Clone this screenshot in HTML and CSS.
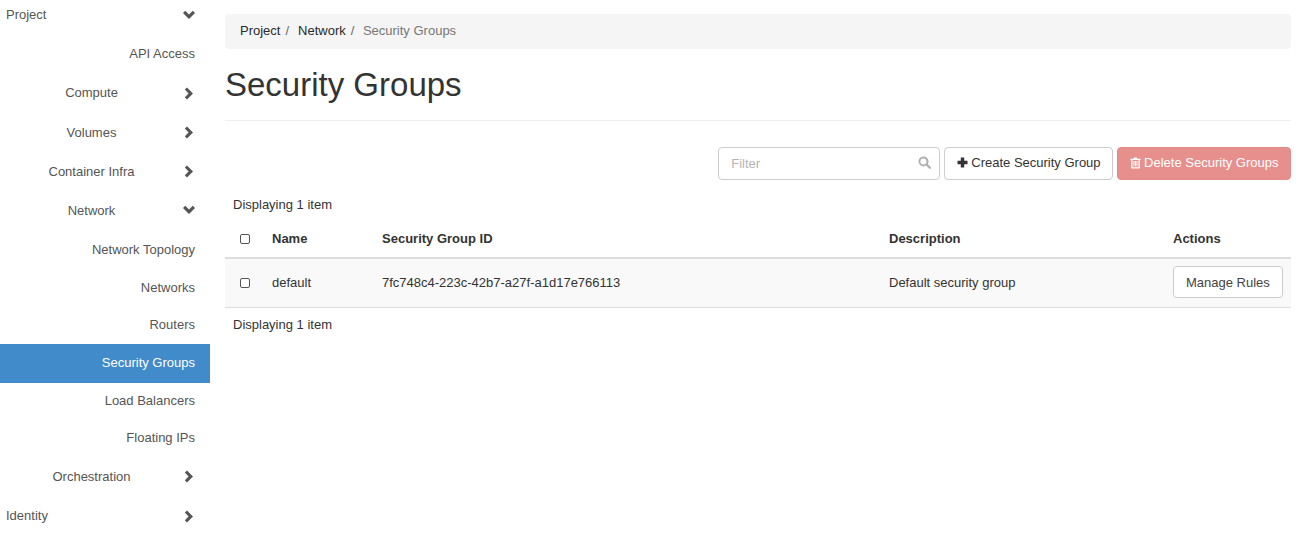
FILE: index.html
```html
<!DOCTYPE html>
<html>
  <head>
    <title>Security Groups</title>
    <link rel="stylesheet" href="styles.css">
  </head>
  <body>
    <div class="page">
      <nav class="sidebar">
        <a class="nav-row nav-top nav-first"><span class="nav-label">Project</span><svg class="chev" viewBox="0 0 14 14"><path d="M1 5 3.200 2.800 7 6.600 10.800 2.800 13 5 7 11Z"/></svg></a>
        <a class="nav-leaf">API Access</a>
        <a class="nav-row"><span class="nav-label">Compute</span><svg class="chev" viewBox="0 0 14 14"><path d="M5 1.400 11 7.400 5 13.400 2.800 11.200 6.600 7.400 2.800 3.600Z"/></svg></a>
        <a class="nav-row"><span class="nav-label">Volumes</span><svg class="chev" viewBox="0 0 14 14"><path d="M5 1.400 11 7.400 5 13.400 2.800 11.200 6.600 7.400 2.800 3.600Z"/></svg></a>
        <a class="nav-row"><span class="nav-label">Container Infra</span><svg class="chev" viewBox="0 0 14 14"><path d="M5 1.400 11 7.400 5 13.400 2.800 11.200 6.600 7.400 2.800 3.600Z"/></svg></a>
        <a class="nav-row nav-open"><span class="nav-label">Network</span><svg class="chev" viewBox="0 0 14 14"><path d="M1 5 3.200 2.800 7 6.600 10.800 2.800 13 5 7 11Z"/></svg></a>
        <a class="nav-leaf">Network Topology</a>
        <a class="nav-leaf nav-short">Networks</a>
        <a class="nav-leaf">Routers</a>
        <a class="nav-leaf active">Security Groups</a>
        <a class="nav-leaf">Load Balancers</a>
        <a class="nav-leaf">Floating IPs</a>
        <a class="nav-row"><span class="nav-label">Orchestration</span><svg class="chev" viewBox="0 0 14 14"><path d="M5 1.400 11 7.400 5 13.400 2.800 11.200 6.600 7.400 2.800 3.600Z"/></svg></a>
        <a class="nav-row nav-top"><span class="nav-label">Identity</span><svg class="chev" viewBox="0 0 14 14"><path d="M5 1.400 11 7.400 5 13.400 2.800 11.200 6.600 7.400 2.800 3.600Z"/></svg></a>
      </nav>

      <main class="content">
        <div class="breadcrumb">
          <a>Project</a><span class="sep">/</span>
          <a>Network</a><span class="sep">/</span>
          <span class="current">Security Groups</span>
        </div>
        <h1>Security Groups</h1>

        <div class="actions">
          <div class="filter">
            <input type="text" placeholder="Filter">
            <svg class="search-icon" viewBox="0 0 13 13"><path d="M5.400 0.400a5 5 0 1 0 2.800 9.200l2.900 2.900a1.100 1.100 0 0 0 1.600-1.600l-2.900-2.900a5 5 0 0 0-4.400-7.600Zm0 2a3 3 0 1 1 0 6 3 3 0 0 1 0-6Z"/></svg>
          </div>
          <button class="btn btn-tool"><svg class="plus" viewBox="0 0 11 11"><path d="M3.800 .5h3.400v3.300h3.300v3.400H7.200v3.300H3.800V7.200H.5V3.800h3.300Z"/></svg>Create Security Group</button>
          <button class="btn btn-tool btn-danger"><svg class="trash" viewBox="0 0 11 12"><path d="M3.500 1.800 4.200.5h2.600l.7 1.300H10.500v1.200H9.800v7.500c0 .6-.4 1-1 1H2.200c-.6 0-1-.4-1-1V3H.5V1.800ZM2.500 3v7.200h6V3ZM3.500 4h1v5.300h-1Zm1.500 0h1v5.300H5Zm1.500 0h1v5.300h-1Z"/></svg>Delete Security Groups</button>
        </div>

        <div class="count">Displaying 1 item</div>
        <table>
          <thead>
            <tr>
              <th class="col-check"><span class="check"></span></th>
              <th class="col-name">Name</th>
              <th class="col-id">Security Group ID</th>
              <th class="col-desc">Description</th>
              <th>Actions</th>
            </tr>
          </thead>
          <tbody>
            <tr>
              <td class="col-check"><span class="check"></span></td>
              <td>default</td>
              <td>7fc748c4-223c-42b7-a27f-a1d17e766113</td>
              <td>Default security group</td>
              <td><button class="btn btn-row">Manage Rules</button></td>
            </tr>
          </tbody>
        </table>
        <div class="count count-bottom">Displaying 1 item</div>
      </main>
    </div>
  </body>
</html>
```

FILE: styles.css
```css
html,
body {
  height: 100%;
  overflow: hidden;
}

body {
  margin: 0;
  font-family: "Liberation Sans", Arial, sans-serif;
  font-size: 13px;
  color: #333333;
  background-color: #ffffff;
}

.page {
  display: flex;
}

.sidebar {
  flex: none;
  width: 210px;
  margin-top: -4px;
  color: #555555;
}

.nav-row {
  display: flex;
  align-items: center;
  height: 39.3px;
}

.nav-first {
  box-sizing: border-box;
  padding-bottom: 2px;
}

.nav-open {
  box-sizing: border-box;
  height: 40.1px;
  padding-bottom: 1.2px;
}

.nav-label {
  width: 183px;
  text-align: center;
}

.nav-top .nav-label {
  padding-left: 6px;
  width: 177px;
  text-align: left;
}

.chev {
  width: 14px;
  height: 14px;
  margin-left: -1.5px;
  fill: #555555;
}

.nav-leaf {
  display: block;
  height: 37.8px;
  line-height: 38.4px;
  padding-right: 15px;
  text-align: right;
}

.nav-short {
  height: 37px;
}

.nav-leaf.active {
  height: 39px;
  line-height: 37px;
  margin-bottom: -0.7px;
  color: #ffffff;
  background-color: #428bca;
}

.active + .nav-leaf {
  height: 37px;
}

.content {
  flex: 1;
  min-width: 0;
  padding: 14px 6px 0 15px;
}

.breadcrumb {
  display: flex;
  align-items: center;
  height: 35px;
  padding: 0 15px 2px;
  box-sizing: border-box;
  background-color: #f5f5f5;
  border-radius: 4px;
}

.breadcrumb a {
  color: #2a2a2a;
}

.sep {
  margin: 0 9px 0 5px;
  color: #666666;
}

.current {
  margin-left: -0.5px;
  color: #777777;
}

h1 {
  margin: 0;
  padding: 18px 0 17px;
  font-size: 33px;
  font-weight: 400;
  line-height: 36px;
  color: #333333;
  border-bottom: 1px solid #eeeeee;
}

.actions {
  display: flex;
  justify-content: flex-end;
  gap: 4px;
  margin-top: 26px;
}

.filter {
  position: relative;
  width: 222px;
}

.filter input {
  width: 100%;
  height: 33px;
  padding: 0 12px;
  box-sizing: border-box;
  font: inherit;
  color: #555555;
  background-color: #ffffff;
  border: 1px solid #cccccc;
  border-radius: 4px;
}

.filter input::placeholder {
  color: #b5b5b5;
}

.search-icon {
  position: absolute;
  top: 9px;
  right: 9px;
  width: 13px;
  height: 13px;
  fill: #b0b0b0;
}

.btn {
  display: inline-flex;
  align-items: center;
  height: 33px;
  padding: 0 12px;
  font: inherit;
  color: #333333;
  background-color: #ffffff;
  border: 1px solid #cccccc;
  border-radius: 4px;
}

.btn-tool {
  padding: 0 11.5px 2px 12px;
}

.plus {
  width: 11px;
  height: 11px;
  margin-right: 3px;
  fill: #333333;
}

.btn-danger {
  color: #ffffff;
  background-color: #e68f8d;
  border-color: #e38b88;
}

.trash {
  width: 11px;
  height: 12px;
  margin-right: 3px;
  fill: #ffffff;
}

.count {
  margin-top: 17px;
  padding-left: 8px;
  line-height: 15px;
}

table {
  width: 100%;
  margin-top: 8px;
  border-collapse: collapse;
}

th {
  height: 37px;
  padding: 0 8px;
  font-weight: 700;
  text-align: left;
  border-bottom: 2px solid #dddddd;
}

td {
  height: 49px;
  padding: 0 8px 1px;
  box-sizing: border-box;
  background-color: #f9f9f9;
  border-bottom: 1px solid #dddddd;
}

.col-check {
  width: 23px;
}

.col-name {
  width: 94px;
}

.col-id {
  width: 491px;
}

.col-desc {
  width: 268px;
}

.check {
  display: block;
  width: 10px;
  height: 10px;
  margin-left: 7px;
  box-sizing: border-box;
  background-color: #ffffff;
  border: 1px solid #555555;
  border-radius: 2px;
}

td .check {
  margin-top: 2px;
}

.btn-row {
  height: 32px;
  color: #444444;
}

.count-bottom {
  margin-top: 9px;
}
```
